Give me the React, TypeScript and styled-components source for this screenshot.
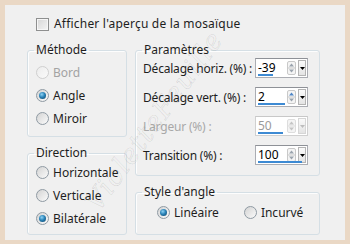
import React from 'react';
import styled, { createGlobalStyle } from 'styled-components';

const GlobalStyle = createGlobalStyle`
  html, body { margin: 0; padding: 0; }
  body {
    font-family: "Noto Sans", "Open Sans", sans-serif;
    font-size: 12px;
    color: #1e1e1e;
  }
`;

const Frame = styled.div`
  width: 350px;
  height: 244px;
  box-sizing: border-box;
  background: #ead8c5;
  padding: 5px 5px 4px 5px;
`;

const Window = styled.div`
  position: relative;
  height: 100%;
  box-sizing: border-box;
  background: #f0f0f0;
  padding: 11px 26px 0 22px;
  overflow: hidden;
`;

const CheckRow = styled.label`
  display: flex;
  align-items: center;
  gap: 5px;
  height: 16px;
  margin-left: 9px;
  line-height: 16px;
  letter-spacing: 0.2px;
`;

const CheckBox = styled.span`
  width: 11px;
  height: 11px;
  border: 1px solid #8e8f8f;
  background: linear-gradient(135deg, #d6d6d6 0%, #f4f4f4 100%);
  box-shadow: inset 0 0 0 1px #f6f6f6;
`;

const Columns = styled.div`
  display: grid;
  grid-template-columns: 100px 185px;
  column-gap: 8px;
  margin-top: 10px;
`;

const Column = styled.div`
  display: flex;
  flex-direction: column;
  gap: 8px;
`;

const Group = styled.fieldset<{ $pt: number; $pb: number }>`
  margin: 0;
  min-width: 0;
  border: 1px solid #d5dfe5;
  border-radius: 3px;
  box-shadow: inset 1px 1px 0 #fdfdfd;
  padding: ${(p) => p.$pt}px 0 ${(p) => p.$pb}px 0;
`;

const Legend = styled.legend`
  margin-left: 6px;
  padding: 0 2px;
  line-height: 16px;
  font-size: 12px;
`;

const RadioRow = styled.label<{ $disabled?: boolean }>`
  display: flex;
  align-items: center;
  gap: 4px;
  height: 23px;
  padding-left: 8px;
  color: ${(p) => (p.$disabled ? '#a3a3a3' : '#1e1e1e')};
`;

const RadioCircle = styled.span<{ $checked?: boolean; $disabled?: boolean }>`
  position: relative;
  width: 11px;
  height: 11px;
  border-radius: 50%;
  border: 1px solid ${(p) => (p.$disabled ? '#cfcfcf' : '#8f9aa3')};
  background: ${(p) =>
    p.$disabled
      ? 'linear-gradient(135deg, #ececec, #fafafa)'
      : 'linear-gradient(135deg, #d3d3d3, #fbfbfb)'};
  &::after {
    content: '';
    display: ${(p) => (p.$checked ? 'block' : 'none')};
    position: absolute;
    left: 2px;
    top: 2px;
    width: 7px;
    height: 7px;
    border-radius: 50%;
    background: radial-gradient(circle at 40% 35%, #8fd3f5 0%, #2a83b8 45%, #0c3f63 100%);
  }
`;

const ParamRow = styled.div<{ $disabled?: boolean }>`
  display: flex;
  align-items: center;
  height: 20px;
  padding: 0 11px 0 7px;
  color: ${(p) => (p.$disabled ? '#a8a8a8' : '#1e1e1e')};
  & + & {
    margin-top: 9px;
  }
`;

const ParamLabel = styled.span`
  flex: 1;
  white-space: nowrap;
  letter-spacing: -0.2px;
`;

const Spin = styled.div<{ $disabled?: boolean }>`
  position: relative;
  display: flex;
  align-items: center;
  width: 53px;
  height: 20px;
  box-sizing: border-box;
  border: 1px solid ${(p) => (p.$disabled ? '#d0d0d0' : '#abadb3')};
  border-top-color: ${(p) => (p.$disabled ? '#c8c8c8' : '#8e9197')};
  background: #fff;
`;

const SpinValue = styled.span<{ $disabled?: boolean }>`
  flex: 1;
  padding-left: 2px;
  line-height: 16px;
  color: ${(p) => (p.$disabled ? '#9a9a9a' : '#000')};
`;

const SpinBar = styled.span`
  position: absolute;
  left: 2px;
  bottom: 1px;
  height: 2px;
  background: #3d8ad3;
`;

const Arrows = styled.svg`
  display: block;
  margin-right: 2px;
`;

const DropButton = styled.span<{ $disabled?: boolean }>`
  display: flex;
  align-items: center;
  justify-content: center;
  width: 8px;
  height: 16px;
  margin-right: 1px;
  border: 1px solid ${(p) => (p.$disabled ? '#d6d6d6' : '#b4b4b4')};
  background: linear-gradient(#fafafa, #e4e4e4);
  box-sizing: border-box;
`;

const StyleRow = styled.div`
  display: flex;
  gap: 17px;
  padding-left: 13px;
  & > label {
    padding-left: 8px;
  }
`;

const Watermark = styled.div`
  position: absolute;
  left: 42px;
  top: 100px;
  transform: rotate(-54deg);
  font-family: "DejaVu Serif", serif;
  font-style: italic;
  font-size: 27px;
  letter-spacing: 1px;
  color: transparent;
  -webkit-text-stroke: 0.6px rgba(0, 0, 0, 0.12);
  pointer-events: none;
  white-space: nowrap;
`;

type Radio = { label: string; checked?: boolean; disabled?: boolean };

const RadioItem = ({ label, checked, disabled }: Radio) => (
  <RadioRow $disabled={disabled}>
    <RadioCircle $checked={checked} $disabled={disabled} />
    {label}
  </RadioRow>
);

const SpinBox = ({ value, bar, disabled, active }: { value: string; bar: number; disabled?: boolean; active?: boolean }) => {
  const arrow = disabled ? '#c4c4c4' : active ? '#4f86c6' : '#9aa3ad';
  const down = disabled ? '#c4c4c4' : '#9aa3ad';
  return (
    <Spin $disabled={disabled}>
      <SpinValue $disabled={disabled}>{value}</SpinValue>
      <SpinBar style={{ width: bar }} />
      <Arrows width="9" height="14" viewBox="0 0 9 14">
        <rect x="0.5" y="0.5" width="8" height="13" rx="1.5" fill="#f4f4f4" stroke={disabled ? '#dddddd' : '#c9c9c9'} />
        <line x1="1" y1="7" x2="8" y2="7" stroke={disabled ? '#dddddd' : '#c9c9c9'} />
        <path d="M4.5 2.5 L7 5.5 L2 5.5 Z" fill={arrow} />
        <path d="M2 8.5 L7 8.5 L4.5 11.5 Z" fill={down} />
      </Arrows>
      <DropButton $disabled={disabled}>
        <svg width="5" height="3" viewBox="0 0 5 3">
          <path d="M0 0 L5 0 L2.5 3 Z" fill={disabled ? '#bdbdbd' : '#000'} />
        </svg>
      </DropButton>
    </Spin>
  );
};

const params = [
  { label: 'Décalage horiz. (%) :', value: '-39', bar: 15 },
  { label: 'Décalage vert. (%) :', value: '2', bar: 27, active: true },
  { label: 'Largeur (%) :', value: '50', bar: 25, disabled: true },
  { label: 'Transition (%) :', value: '100', bar: 44 },
];

export default function App() {
  return (
    <Frame>
      <GlobalStyle />
      <Window>
        <CheckRow>
          <CheckBox />
          Afficher l'aperçu de la mosaïque
        </CheckRow>
        <Columns>
          <Column>
            <Group $pt={3} $pb={6}>
              <Legend>Méthode</Legend>
              <RadioItem label="Bord" disabled />
              <RadioItem label="Angle" checked />
              <RadioItem label="Miroir" />
            </Group>
            <Group $pt={0} $pb={4}>
              <Legend>Direction</Legend>
              <RadioItem label="Horizontale" />
              <RadioItem label="Verticale" />
              <RadioItem label="Bilatérale" checked />
            </Group>
          </Column>
          <Column>
            <Group $pt={0} $pb={10}>
              <Legend>Paramètres</Legend>
              {params.map((p) => (
                <ParamRow key={p.label} $disabled={p.disabled}>
                  <ParamLabel>{p.label}</ParamLabel>
                  <SpinBox value={p.value} bar={p.bar} disabled={p.disabled} active={p.active} />
                </ParamRow>
              ))}
            </Group>
            <Group $pt={1} $pb={10}>
              <Legend>Style d'angle</Legend>
              <StyleRow>
                <RadioItem label="Linéaire" checked />
                <RadioItem label="Incurvé" />
              </StyleRow>
            </Group>
          </Column>
        </Columns>
        <Watermark>VioletteFeuille</Watermark>
      </Window>
    </Frame>
  );
}
